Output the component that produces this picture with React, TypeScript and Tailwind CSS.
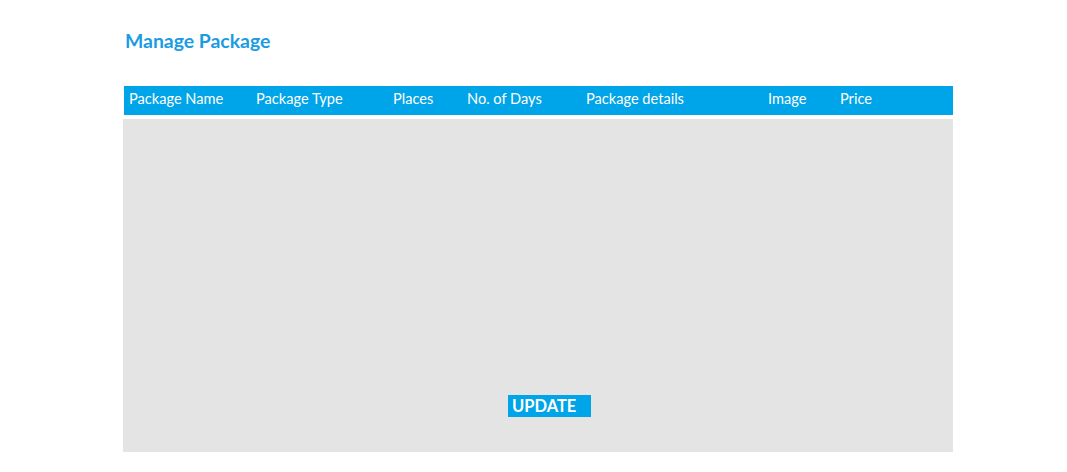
import React from 'react';

const COLUMNS = [
  { label: 'Package Name', width: 'w-[127px]' },
  { label: 'Package Type', width: 'w-[137px]' },
  { label: 'Places', width: 'w-[74px]' },
  { label: 'No. of Days', width: 'w-[119px]' },
  { label: 'Package details', width: 'w-[182px]' },
  { label: 'Image', width: 'w-[72px]' },
  { label: 'Price', width: 'w-[60px]' },
];

export default function App() {
  return (
    <div className="w-[1067px] h-[472px] bg-white font-['Lato','Open_Sans',sans-serif]">
      <div className="pl-[123px] pt-[29px] w-[953px]">
        <h1 className="pl-[2px] text-[19.4px] leading-[24px] font-bold text-[#1a9ce2]">Manage Package</h1>

        {/* Table header */}
        <div className="mt-[33px] ml-[1px] h-[29px] bg-[#00a4e8] flex items-center pl-[5px] pb-[2px] text-white text-[14.6px]">
          {COLUMNS.map((col) => (
            <div key={col.label} className={`${col.width} shrink-0 leading-none`}>
              {col.label}
            </div>
          ))}
        </div>

        {/* Body */}
        <div className="mt-[4px] h-[333px] bg-[#e4e4e4] flex flex-col">
          <div className="mt-auto mb-[34px] ml-[385px]">
            <button className="w-[83px] h-[22px] bg-[#00a4e8] text-white font-bold text-[16.5px] leading-none text-left pl-[4px]">
              UPDATE
            </button>
          </div>
        </div>
      </div>
    </div>
  );
}
